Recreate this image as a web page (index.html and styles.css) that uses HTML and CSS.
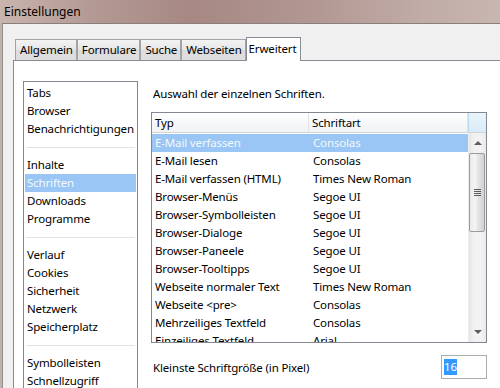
FILE: index.html
```html
<!DOCTYPE html>
<html lang="de">
<head>
<meta charset="utf-8">
<title>Einstellungen</title>
<link rel="stylesheet" href="styles.css">
</head>
<body>
<div class="window">
  <div class="titlebar">Einstellungen</div>
  <div class="frame">
    <div class="client">
      <div class="tabs">
        <div class="tab">Allgemein</div>
        <div class="tab">Formulare</div>
        <div class="tab">Suche</div>
        <div class="tab">Webseiten</div>
        <div class="tab active">Erweitert</div>
      </div>
      <div class="panel">
        <ul class="nav">
          <li>Tabs</li>
          <li>Browser</li>
          <li>Benachrichtigungen</li>
          <li class="sep"></li>
          <li>Inhalte</li>
          <li class="sel">Schriften</li>
          <li>Downloads</li>
          <li>Programme</li>
          <li class="sep"></li>
          <li>Verlauf</li>
          <li>Cookies</li>
          <li>Sicherheit</li>
          <li>Netzwerk</li>
          <li>Speicherplatz</li>
          <li class="sep"></li>
          <li>Symbolleisten</li>
          <li>Schnellzugriff</li>
        </ul>
        <div class="content">
          <p class="intro">Auswahl der einzelnen Schriften.</p>
          <div class="topline">
            <div class="table">
              <div class="thead">
                <div class="th c1">Typ</div>
                <div class="th c2">Schriftart</div>
                <div class="th corner"></div>
              </div>
              <div class="tbody">
                <div class="rows">
                  <div class="row sel"><span class="c1">E-Mail verfassen</span><span class="c2">Consolas</span></div>
                  <div class="row"><span class="c1">E-Mail lesen</span><span class="c2">Consolas</span></div>
                  <div class="row"><span class="c1">E-Mail verfassen (HTML)</span><span class="c2">Times New Roman</span></div>
                  <div class="row"><span class="c1">Browser-Menüs</span><span class="c2">Segoe UI</span></div>
                  <div class="row"><span class="c1">Browser-Symbolleisten</span><span class="c2">Segoe UI</span></div>
                  <div class="row"><span class="c1">Browser-Dialoge</span><span class="c2">Segoe UI</span></div>
                  <div class="row"><span class="c1">Browser-Paneele</span><span class="c2">Segoe UI</span></div>
                  <div class="row"><span class="c1">Browser-Tooltipps</span><span class="c2">Segoe UI</span></div>
                  <div class="row"><span class="c1">Webseite normaler Text</span><span class="c2">Times New Roman</span></div>
                  <div class="row"><span class="c1">Webseite &lt;pre&gt;</span><span class="c2">Consolas</span></div>
                  <div class="row"><span class="c1">Mehrzeiliges Textfeld</span><span class="c2">Consolas</span></div>
                  <div class="row"><span class="c1">Einzeiliges Textfeld</span><span class="c2">Arial</span></div>
                </div>
                <div class="scrollbar">
                  <div class="arrow up"></div>
                  <div class="track">
                    <div class="thumb"><span class="grip"></span></div>
                  </div>
                  <div class="arrow down"></div>
                </div>
              </div>
            </div>
            <div class="edge"></div>
          </div>
          <div class="sizerow">
            <span class="label">Kleinste Schriftgröße (in Pixel)</span>
            <div class="input"><span class="hl">16</span></div>
          </div>
        </div>
      </div>
    </div>
  </div>
</div>
</body>
</html>
```

FILE: styles.css
```css
* { box-sizing: border-box; }
html, body {
  margin: 0;
  padding: 0;
  width: 500px;
  height: 388px;
  overflow: hidden;
  background: #f0f0f0;
  font-family: "Noto Sans", "Open Sans", sans-serif;
  font-size: 11.5px;
  letter-spacing: -0.15px;
  color: #000;
}
.window {
  width: 500px;
  height: 388px;
  display: flex;
  flex-direction: column;
  background: #bfa7a1;
  overflow: hidden;
}
.titlebar {
  height: 23px;
  flex: none;
  padding-left: 4px;
  line-height: 23px;
  font-size: 12px;
  letter-spacing: 0;
  color: #000;
  background: linear-gradient(90deg, #c9b4ae 0%, #b49a94 18%, #a78883 38%, #b09590 60%, #c1aca7 85%, #c8b6b1 100%);
}
.frame {
  flex: 1;
  min-height: 0;
  padding-left: 2px;
  background: #c6b2ad;
  display: flex;
}
.client {
  flex: 1;
  min-width: 0;
  border-left: 1px solid #8e8e8e;
  border-top: 1px solid #8a7f7c;
  background: #f0f0f0;
  display: flex;
  flex-direction: column;
  padding-top: 12px;
  padding-left: 10px;
}
.tabs {
  display: flex;
  align-items: flex-end;
  height: 24px;
  flex: none;
  padding-left: 2px;
  position: relative;
  z-index: 1;
}
.tab {
  height: 21px;
  padding: 0 3px 0 4px;
  margin-right: 0;
  line-height: 20px;
  border: 1px solid #a0a3a8;
  border-bottom: none;
  background: linear-gradient(#f3f3f3, #e6e6e6 50%, #dcdcdc 51%, #dedede);
  white-space: nowrap;
}
.tab.active {
  height: 24px;
  padding: 0 4px 0 2px;
  background: #fff;
  border-color: #898c95;
  line-height: 22px;
  margin-bottom: -1px;
}
.panel {
  flex: 1;
  min-height: 0;
  overflow: hidden;
  background: #fff;
  border-left: 1px solid #898c95;
  border-top: 1px solid #898c95;
  display: flex;
  align-items: stretch;
  padding: 20px 0 0 9px;
}
.nav {
  list-style: none;
  margin: 0;
  padding: 2px 1px 0 1px;
  width: 115px;
  flex: none;
  overflow: hidden;
  border: 1px solid #828790;
  border-bottom: none;
  background: #fff;
}
.nav li {
  height: 18px;
  line-height: 18px;
  padding-left: 2px;
  white-space: nowrap;
}
.nav li.sel {
  background: #99c6f4;
  color: #f4f8fc;
}
.nav li.sep {
  display: flex;
  align-items: center;
  padding: 0 1px;
}
.nav li.sep::before {
  content: "";
  flex: 1;
  height: 1px;
  background: #e2e2e2;
}
.content {
  margin-left: 13px;
  flex: 1;
  min-width: 0;
}
.intro {
  margin: 5px 0 0 2px;
  height: 16px;
  line-height: 16px;
}
.topline {
  display: flex;
  align-items: flex-start;
  margin-top: 10px;
}
.table {
  width: 336px;
  height: 231px;
  border: 1px solid #828790;
  display: flex;
  flex-direction: column;
  flex: none;
  overflow: hidden;
}
.thead {
  display: flex;
  height: 20px;
  flex: none;
  border-bottom: 1px solid #d5d5d5;
  background: linear-gradient(#ffffff, #f7f8f9 50%, #f1f2f4);
}
.th {
  line-height: 19px;
  height: 19px;
  white-space: nowrap;
}
.th.c1 {
  width: 157px;
  padding-left: 3px;
  border-right: 1px solid #e1e3e6;
}
.th.c2 {
  width: 159px;
  padding-left: 3px;
  border-right: 1px solid #dfe3e8;
}
.th.corner {
  flex: 1;
  background: linear-gradient(#e9f4fb, #d7ecf8);
  border-left: 1px solid #bedbee;
}
.tbody {
  flex: 1;
  min-height: 0;
  display: flex;
  overflow: hidden;
}
.rows {
  width: 316px;
  flex: none;
  padding-top: 1px;
}
.row {
  display: flex;
  height: 18px;
  line-height: 18px;
  white-space: nowrap;
}
.row .c1 { width: 158px; padding-left: 3px; }
.row .c2 { padding-left: 3px; }
.row.sel {
  background: #99c6f4;
  color: #f4f8fc;
}
.scrollbar {
  flex: 1;
  display: flex;
  flex-direction: column;
  background: linear-gradient(90deg, #e6e6e6, #f2f2f2 30%, #f2f2f2 70%, #e9e9e9);
  border-left: 1px solid #ececec;
}
.arrow {
  height: 20px;
  flex: none;
  display: flex;
  align-items: center;
  justify-content: center;
}
.arrow::before {
  content: "";
  width: 0;
  height: 0;
  border-left: 4px solid transparent;
  border-right: 4px solid transparent;
}
.arrow.up::before { border-bottom: 4px solid #5d5d5d; }
.arrow.down::before { border-top: 4px solid #5d5d5d; }
.track {
  flex: 1;
  padding: 0 1px 0 0;
}
.thumb {
  height: 79px;
  border: 1px solid #9b9b9b;
  border-radius: 2px;
  background: linear-gradient(90deg, #e9e9e9, #f5f5f5 35%, #e4e4e4 60%, #d0d0d0);
  display: flex;
  align-items: center;
  justify-content: center;
}
.grip {
  width: 7px;
  height: 7px;
  background: repeating-linear-gradient(#5b5b5b 0 1px, transparent 1px 2px);
}
.edge {
  width: 2px;
  height: 12px;
  margin-top: 11px;
  margin-left: 13px;
  background: #707070;
}
.sizerow {
  display: flex;
  align-items: center;
  margin-top: 12px;
  width: 336px;
  justify-content: space-between;
}
.label {
  padding-left: 2px;
}
.input {
  width: 46px;
  height: 24px;
  border: 1px solid #abadb3;
  background: #fff;
  padding: 3px 0 0 2px;
}
.hl {
  background: #3399ff;
  color: #fff;
  line-height: 16px;
  display: inline-block;
}
```
